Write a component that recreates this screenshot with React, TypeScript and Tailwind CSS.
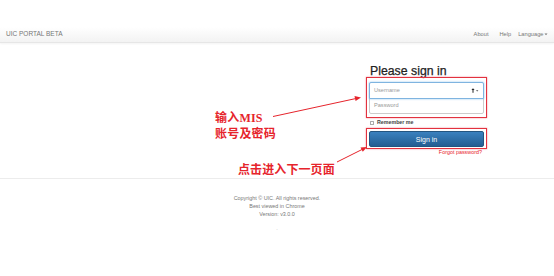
import React from "react";

export default function App() {
  return (
    <div
      className="relative w-[554px] h-[276px] overflow-hidden bg-white"
      style={{ fontFamily: '"Liberation Sans", Arial, sans-serif' }}
    >
      {/* top spacer */}
      <div className="h-[27px]" />

      {/* navbar */}
      <nav className="h-[16px] flex items-center justify-between pl-[6px] pr-[6px] bg-gradient-to-b from-white to-[#f3f3f3] border-b border-[#e6e6e6] shadow-[0_1px_2px_rgba(0,0,0,0.05)]">
        <span className="text-[6.5px] text-[#777] leading-none">UIC PORTAL BETA</span>
        <div className="flex items-center text-[5.7px] text-[#777] leading-none">
          <span className="mr-[11px]">About</span>
          <span className="mr-[7px]">Help</span>
          <span className="flex items-center">
            Language
            <svg width="4" height="3" viewBox="0 0 4 3" className="ml-[0.5px]">
              <path d="M0.5 0.5 L3.5 0.5 L2 2.3 Z" fill="#777" />
            </svg>
          </span>
        </div>
      </nav>

      {/* main */}
      <div className="flex justify-end pr-[70px] pt-[22px] h-[135px]">
        <div className="w-[115px] flex flex-col">
          <h2 className="text-[12.3px] leading-[12px] text-[#222] ml-[1px] [-webkit-text-stroke:0.25px_#222]">Please sign in</h2>

          <div className="relative mt-[5px]">
            <div className="h-[17px] rounded-t-[2px] border border-[#7fb4e0] shadow-[0_0_2px_rgba(102,175,233,0.8)] flex items-center justify-between pl-[4px] pr-[4px] bg-white relative z-10">
              <span className="text-[5.6px] text-[#999] leading-none">Username</span>
              <svg width="8" height="5" viewBox="0 0 8 5">
                <path d="M2 0.3 L3.6 2 L2.5 2 L2.5 4.7 L1.5 4.7 L1.5 2 L0.4 2 Z" fill="#222" />
                <path d="M5 2.3 L7.4 2.3 L6.2 3.6 Z" fill="#444" />
              </svg>
            </div>
            <div className="h-[16px] -mt-px rounded-b-[2px] border border-[#ccc] flex items-center pl-[4px] bg-white">
              <span className="text-[5.6px] text-[#999] leading-none">Password</span>
            </div>
            <div className="absolute -left-[3px] -right-[3px] -top-[5px] -bottom-[4px] border-[1.5px] border-[#e2323f] shadow-[0_0_1.5px_rgba(226,50,63,0.6)] pointer-events-none z-20" />
          </div>

          <label className="mt-[5px] h-[8px] flex items-center ml-[1px]">
            <span className="w-[4px] h-[4px] border-[0.5px] border-[#aaa] bg-white rounded-[0.5px]" />
            <span className="ml-[3px] text-[5.3px] text-[#444] font-semibold leading-none">Remember me</span>
          </label>

          <div className="relative mt-[4px]">
            <div className="h-[16px] rounded-[2px] border border-[#245580] bg-gradient-to-b from-[#3a81bf] to-[#245e92] flex items-center justify-center">
              <span className="text-[7px] text-white leading-none">Sign in</span>
            </div>
            <div className="absolute -left-[3px] -right-[3px] -top-[3px] -bottom-[2px] border-[1.5px] border-[#e2323f] shadow-[0_0_1.5px_rgba(226,50,63,0.6)] pointer-events-none" />
          </div>

          <div className="mt-[2px] flex justify-end pr-[2px]">
            <span className="text-[5.4px] text-[#e8232b] leading-[6px]">Forgot password?</span>
          </div>
        </div>
      </div>

      {/* footer */}
      <footer className="border-t border-[#ececec] pt-[15px] flex flex-col items-center text-[5.4px] leading-[8px] text-[#777]">
        <span>Copyright © UIC. All rights reserved.</span>
        <span>Best viewed in Chrome</span>
        <span>Version: v3.0.0</span>
        <span className="mt-[8px] text-[#999] leading-[4px]">.</span>
      </footer>

      {/* annotations */}
      <div
        className="absolute left-[215px] top-[110px] text-[12px] leading-[13.5px] font-bold text-[#e6242c] tracking-[0.2px]"
        style={{ fontFamily: '"Noto Sans CJK SC", sans-serif' }}
      >
        <div>
          输入<span style={{ fontFamily: '"Liberation Serif", serif' }}>MIS</span>
        </div>
        <div>账号及密码</div>
      </div>
      <div
        className="absolute left-[238px] top-[162px] text-[12px] leading-[13px] font-bold text-[#e6242c] tracking-[0.1px]"
        style={{ fontFamily: '"Noto Sans CJK SC", sans-serif' }}
      >
        点击进入下一页面
      </div>

      <svg
        className="absolute left-0 top-0 pointer-events-none"
        width="554"
        height="276"
        viewBox="0 0 554 276"
      >
        <line x1="273" y1="116.5" x2="356" y2="98.5" stroke="#e6242c" strokeWidth="1" />
        <path d="M361 97.5 L354.5 96 L355.6 101 Z" fill="#e6242c" />
        <line x1="337" y1="162" x2="362" y2="149.5" stroke="#e6242c" strokeWidth="1" />
        <path d="M367 147 L360.5 147.5 L362.8 151.8 Z" fill="#e6242c" />
      </svg>
    </div>
  );
}
